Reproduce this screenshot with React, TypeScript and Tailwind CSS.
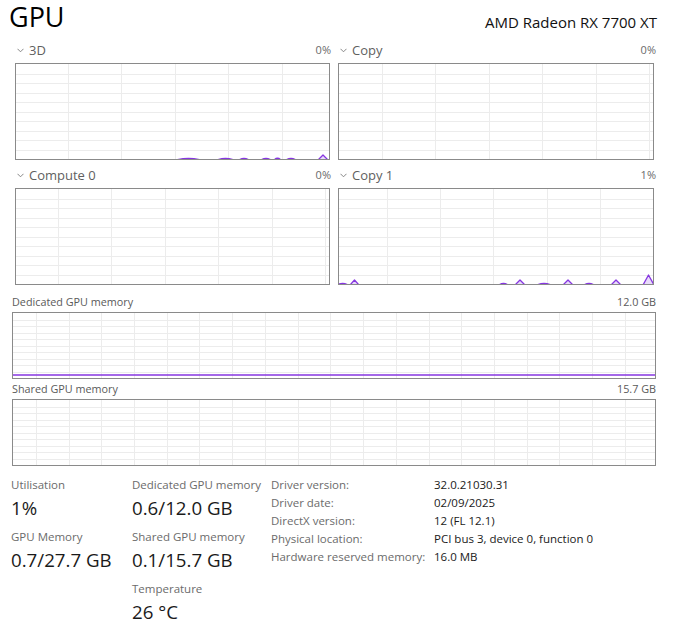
import React from "react";

type Bump = { x1: number; x2: number; h: number; peak?: number };

const GRID = "#ececec";
const LINE = "#8636e0";
const FILL = "#e8dbfa";

function bumpPath(bumps: Bump[], height: number) {
  const base = height + 1;
  return bumps
    .map((b) => {
      const top = height - b.h;
      if (b.peak !== undefined) {
        return `M${b.x1} ${base} L${b.peak} ${top} L${b.x2} ${base} Z`;
      }
      const mid = (b.x1 + b.x2) / 2;
      return `M${b.x1} ${base} Q${mid} ${top - b.h} ${b.x2} ${base} Z`;
    })
    .join(" ");
}

function Graph({
  width,
  height,
  colOffset,
  colStep,
  rows,
  bumps = [],
  line,
}: {
  width: number;
  height: number;
  colOffset: number;
  colStep: number;
  rows: number;
  bumps?: Bump[];
  line?: number;
}) {
  const cols: number[] = [];
  for (let x = colOffset; x < width; x += colStep) cols.push(Math.round(x) + 0.5);
  const hLines: number[] = [];
  for (let k = 1; k < rows; k++) hLines.push(Math.round((k * height) / rows) + 0.5);

  return (
    <div className="border border-[#8a8a8a] bg-white" style={{ width: width + 2, height: height + 2 }}>
      <svg width={width} height={height} className="block">
        {cols.map((x) => (
          <line key={"v" + x} x1={x} y1={0} x2={x} y2={height} stroke={GRID} strokeWidth={1} />
        ))}
        {hLines.map((y) => (
          <line key={"h" + y} x1={0} y1={y} x2={width} y2={y} stroke={GRID} strokeWidth={1} />
        ))}
        {bumps.length > 0 && (
          <path d={bumpPath(bumps, height)} fill={FILL} stroke={LINE} strokeWidth={1.3} strokeLinejoin="round" />
        )}
        {line !== undefined && (
          <line x1={0} y1={line} x2={width} y2={line} stroke={LINE} strokeWidth={1.6} />
        )}
      </svg>
    </div>
  );
}

function Chevron() {
  return (
    <svg width="7" height="5" viewBox="0 0 7 5" className="mr-[5px]">
      <path d="M0.5 0.8 L3.5 3.8 L6.5 0.8" fill="none" stroke="#7a7a7a" strokeWidth="0.9" />
    </svg>
  );
}

function EngineCell({
  label,
  pct,
  children,
}: {
  label: string;
  pct: string;
  children: React.ReactNode;
}) {
  return (
    <div className="flex flex-col">
      <div className="h-[25px] flex items-center justify-between pl-[2px]">
        <div className="flex items-center text-[13px] text-[#5f5f5f]">
          <Chevron />
          {label}
        </div>
        <span className="text-[11px] text-[#6a6a6a]">{pct}</span>
      </div>
      {children}
    </div>
  );
}

const threeDBumps: Bump[] = [
  { x1: 160, x2: 185, h: 1.2 },
  { x1: 201, x2: 218, h: 1.2 },
  { x1: 223, x2: 233, h: 1.2 },
  { x1: 245, x2: 255, h: 1.2 },
  { x1: 258, x2: 265, h: 1.2 },
  { x1: 270, x2: 280, h: 1.2 },
  { x1: 302, x2: 312, h: 4, peak: 307 },
];

const copy1Bumps: Bump[] = [
  { x1: -2, x2: 9, h: 1.2 },
  { x1: 11, x2: 20, h: 4, peak: 15.5 },
  { x1: 160, x2: 169, h: 1.2 },
  { x1: 176, x2: 186, h: 4, peak: 181 },
  { x1: 198, x2: 212, h: 1.2 },
  { x1: 224, x2: 234, h: 4, peak: 229 },
  { x1: 245, x2: 255, h: 1.2 },
  { x1: 272, x2: 282, h: 4, peak: 277 },
  { x1: 304, x2: 315, h: 9, peak: 309.5 },
];

const details = [
  ["Driver version:", "32.0.21030.31"],
  ["Driver date:", "02/09/2025"],
  ["DirectX version:", "12 (FL 12.1)"],
  ["Physical location:", "PCI bus 3, device 0, function 0"],
  ["Hardware reserved memory:", "16.0 MB"],
];

function Stat({ label, value }: { label: string; value: string }) {
  return (
    <div className="flex flex-col">
      <div className="h-[18px] leading-[18px] text-[11.5px] text-[#6b6b6b] whitespace-nowrap">{label}</div>
      <div className="h-[28px] leading-[28px] text-[18.7px] text-[#1a1a1a] whitespace-nowrap">{value}</div>
    </div>
  );
}

export default function App() {
  return (
    <div className="w-[673px] h-[630px] bg-white overflow-hidden font-['Open_Sans','Noto_Sans',sans-serif]">
      {/* Header */}
      <div className="h-[38px] flex items-start justify-between pl-[9px] pr-[16px]">
        <h1 className="mt-[2px] text-[27px] leading-[30px] text-black">GPU</h1>
        <div className="text-[15px] leading-[15px] mt-[15px] text-[#111]">AMD Radeon RX 7700 XT</div>
      </div>

      {/* Engines */}
      <div className="pl-[15px] grid grid-cols-[316px_318px] gap-x-[7px] gap-y-[3px]">
        <EngineCell label="3D" pct="0%">
          <Graph width={313} height={95} colOffset={52} colStep={53.4} rows={10} bumps={threeDBumps} />
        </EngineCell>
        <EngineCell label="Copy" pct="0%">
          <Graph width={314} height={95} colOffset={43} colStep={53.4} rows={10} />
        </EngineCell>
        <EngineCell label="Compute 0" pct="0%">
          <Graph width={313} height={95} colOffset={42} colStep={53.4} rows={10} />
        </EngineCell>
        <EngineCell label="Copy 1" pct="1%">
          <Graph width={314} height={95} colOffset={47.5} colStep={53.4} rows={10} bumps={copy1Bumps} />
        </EngineCell>
      </div>

      {/* Memory */}
      <div className="mt-[7px] pl-[12px] pr-[17px]">
        <div className="h-[20px] flex items-center justify-between text-[10.8px] text-[#5a5a5a]">
          <span>Dedicated GPU memory</span>
          <span>12.0 GB</span>
        </div>
        <Graph width={642} height={65} colOffset={22.8} colStep={32.73} rows={10} line={62} />
        <div className="h-[20px] flex items-center justify-between text-[10.8px] text-[#5a5a5a]">
          <span>Shared GPU memory</span>
          <span>15.7 GB</span>
        </div>
        <Graph width={642} height={65} colOffset={22.8} colStep={32.73} rows={10} />
      </div>

      {/* Stats */}
      <div className="mt-[10px] pl-[11px] flex">
        <div className="w-[121px] flex flex-col gap-y-[6px]">
          <Stat label="Utilisation" value="1%" />
          <Stat label="GPU Memory" value="0.7/27.7 GB" />
        </div>
        <div className="w-[139px] flex flex-col gap-y-[6px]">
          <Stat label="Dedicated GPU memory" value="0.6/12.0 GB" />
          <Stat label="Shared GPU memory" value="0.1/15.7 GB" />
          <Stat label="Temperature" value="26 °C" />
        </div>
        <div className="flex flex-col">
          {details.map(([k, v]) => (
            <div key={k} className="h-[18px] flex items-center text-[11.5px] whitespace-nowrap">
              <span className="w-[163px] text-[#6b6b6b]">{k}</span>
              <span className="text-[#1a1a1a]">{v}</span>
            </div>
          ))}
        </div>
      </div>
    </div>
  );
}
